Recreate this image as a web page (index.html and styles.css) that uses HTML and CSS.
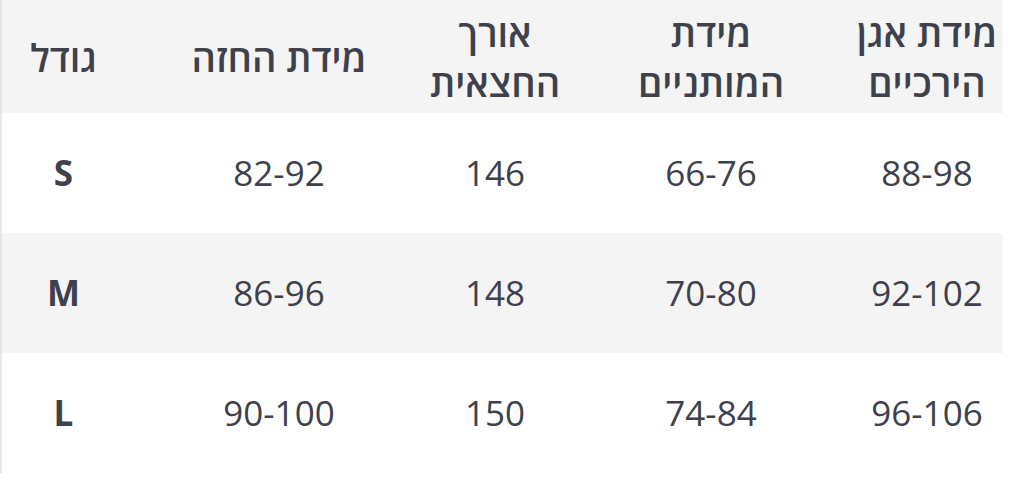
FILE: index.html
```html
<!DOCTYPE html>
<html lang="he">
<head>
<meta charset="utf-8">
<link rel="stylesheet" href="styles.css">
</head>
<body>
<div class="wrap">
  <table class="sizes" dir="rtl">
    <colgroup>
      <col class="c-data"><col class="c-data"><col class="c-data"><col class="c-data"><col class="c-size">
    </colgroup>
    <thead>
      <tr>
        <th>מידת אגן הירכיים</th>
        <th>מידת המותניים</th>
        <th>אורך החצאית</th>
        <th>מידת החזה</th>
        <th class="size">גודל</th>
      </tr>
    </thead>
    <tbody>
      <tr>
        <td>88-98</td><td>66-76</td><td>146</td><td>82-92</td><td class="size">S</td>
      </tr>
      <tr class="alt">
        <td>92-102</td><td>70-80</td><td>148</td><td>86-96</td><td class="size">M</td>
      </tr>
      <tr>
        <td>96-106</td><td>74-84</td><td>150</td><td>90-100</td><td class="size">L</td>
      </tr>
    </tbody>
  </table>
</div>
</body>
</html>
```

FILE: styles.css
```css
html, body {
  margin: 0;
  padding: 0;
  background: #ffffff;
}

.wrap {
  width: 1003px;
  overflow: hidden;
  direction: ltr;
}

.sizes {
  direction: rtl;
  table-layout: fixed;
  width: 1034px;
  border-collapse: collapse;
  font-family: "Open Sans", "Noto Sans", sans-serif;
  color: #3e414c;
}

.c-data { width: 216px; }
.c-size { width: 170px; }

.sizes th,
.sizes td {
  text-align: center;
  vertical-align: middle;
  padding: 0 16px;
  font-size: 35px;
}

.sizes th {
  height: 113px;
  font-size: 38px;
  font-weight: 600;
  line-height: 50px;
  background: #f4f4f4;
}

.sizes td {
  height: 120px;
  font-weight: 400;
  line-height: 48px;
}

.sizes tbody tr:last-child td {
  height: 120px;
}

.sizes tr.alt td {
  background: #f4f4f4;
}

.sizes .size {
  padding: 0 46px 0 0;
  border-left: 2px solid #e6e6e6;
}

.sizes td.size {
  font-weight: 700;
}
```
